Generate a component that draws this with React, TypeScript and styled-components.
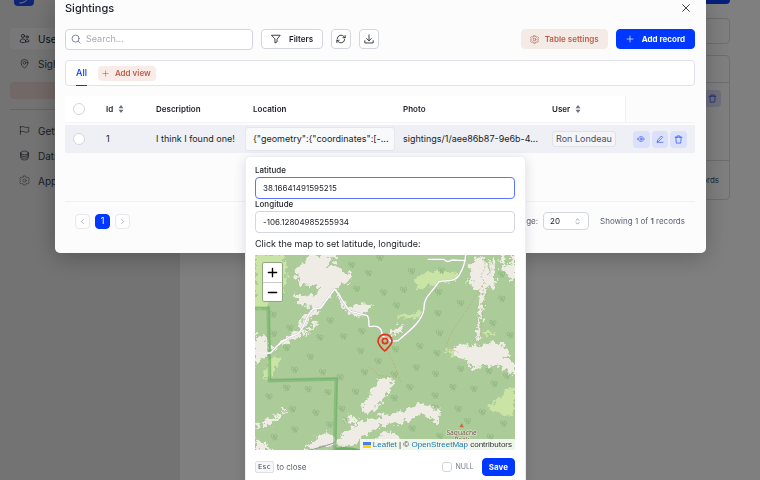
import React from "react";
import styled, { createGlobalStyle, css } from "styled-components";
import {
  HiOutlineUsers,
  HiOutlineMapPin,
  HiOutlineFlag,
  HiOutlineCircleStack,
} from "react-icons/hi2";

const GlobalStyle = createGlobalStyle`
  *, *::before, *::after { box-sizing: border-box; }
  html, body { margin: 0; padding: 0; }
  body {
    font-family: Inter, "Liberation Sans", sans-serif;
    font-size: 9px;
    line-height: 12px;
    color: #1b1e26;
    overflow: hidden;
  }
  button, input, select { font: inherit; color: inherit; margin: 0; }
  button { cursor: pointer; }
`;

/* ---------- icons ---------- */

const Icon = styled.svg<{ $size?: number; $weight?: number }>`
  width: ${(p) => p.$size ?? 10}px;
  height: ${(p) => p.$size ?? 10}px;
  flex: none;
  display: block;
  fill: none;
  stroke: currentColor;
  stroke-width: ${(p) => p.$weight ?? 2};
  stroke-linecap: round;
  stroke-linejoin: round;
`;

type IconProps = { size?: number; weight?: number };

const makeIcon = (body: React.ReactNode) =>
  function Glyph({ size, weight }: IconProps) {
    return (
      <Icon viewBox="0 0 24 24" $size={size} $weight={weight} aria-hidden="true">
        {body}
      </Icon>
    );
  };

const SearchIcon = makeIcon(<><circle cx="11" cy="11" r="8.5" /><path d="M17.5 17.5 22 22" /></>);
const FilterIcon = makeIcon(<path d="M2 3h20l-7.500 9.500V19l-5 2.500v-9z" />);
const RefreshIcon = makeIcon(
  <><path d="M3 11a9.200 9.200 0 0 1 16.500-4.500L22 9" /><path d="M22 3.500V9h-5.500" /><path d="M21 13a9.200 9.200 0 0 1-16.500 4.500L2 15" /><path d="M2 20.500V15h5.500" /></>
);
const DownloadIcon = makeIcon(<><path d="M12 2v14M6.500 11l5.500 5.500 5.500-5.500" /><path d="M2 16v5.500h20V16" /></>);
const PlusIcon = makeIcon(<path d="M12 3v18M3 12h18" />);
const CloseIcon = makeIcon(<path d="M4 4l16 16M20 4 4 20" />);
const CogIcon = makeIcon(
  <>
    <path d="M10 2h4l.7 2.700 2.400 1 2.500-1.400 2.800 2.800L21 9.600l.8 2.400-.8 2.400 1.400 2.500-2.800 2.800-2.500-1.400-2.400 1L14 22h-4l-.7-2.700-2.400-1-2.500 1.400-2.800-2.800L3 14.400 2.200 12 3 9.600 1.600 7.100l2.800-2.800 2.500 1.400 2.400-1z" />
    <circle cx="12" cy="12" r="3.500" />
  </>
);
const EyeIcon = makeIcon(<><path d="M2 12c3-5 6.500-7 10-7s7 2 10 7c-3 5-6.500 7-10 7s-7-2-10-7z" /><circle cx="12" cy="12" r="3.200" /></>);
const PenIcon = makeIcon(<><path d="M4 20l1-5L16 3l4 4L9 18z" /><path d="M3 22h18" /></>);
const TrashIcon = makeIcon(<><path d="M3 6h18M8 6V2.500h8V6" /><path d="M5 6l1 15.500h12L19 6" /></>);
const LeftIcon = makeIcon(<path d="M15 5l-7 7 7 7" />);
const RightIcon = makeIcon(<path d="M9 5l7 7-7 7" />);
const ChevronsIcon = makeIcon(<path d="M7 8l5-5 5 5M7 16l5 5 5-5" />);

const SortSvg = styled.svg`
  width: 6px;
  height: 8px;
  fill: #6a7180;
`;
const SortIcon = () => (
  <SortSvg viewBox="0 0 12 16" aria-hidden="true">
    <path d="M6 0l5 6.500H1zM6 16l5-6.500H1z" />
  </SortSvg>
);

/* ---------- page behind the dialog ---------- */

const Page = styled.div`
  display: flex;
  min-height: 100vh;
  background: #fefefe;
`;

const Sidebar = styled.nav`
  width: 180px;
  flex: none;
  padding: 0 10px;
  background: #e6e6e8;
`;

const Logo = styled.div`
  width: 20px;
  height: 6px;
  margin: 0 0 22px 4px;
  border-radius: 0 0 4px 4px;
  background: #1c49f0;
  color: #fff;
  overflow: hidden;
`;

const NavLink = styled.a<{ $active?: boolean }>`
  display: flex;
  align-items: center;
  gap: 8px;
  height: 21px;
  margin-bottom: 4px;
  padding-left: 9px;
  border-radius: 4px;
  font-size: 10px;
  color: #3c3e46;
  text-decoration: none;
  svg { width: 11px; height: 11px; }
  ${(p) => p.$active && css`background: #f0f0f3; color: #16181e;`}
`;

const NavAdd = styled.button`
  display: block;
  width: 100%;
  height: 17px;
  margin: 8px 0 10px;
  border: 0;
  border-radius: 4px;
  background: #e4d0cc;
`;

const NavRule = styled.hr`
  height: 1px;
  margin: 0 0 10px;
  border: 0;
  background: #c9cace;
`;

const Main = styled.main`
  flex: 1;
  display: flex;
  flex-direction: column;
  padding: 0 30px 0 20px;
`;

const MainAction = styled.button`
  align-self: flex-end;
  width: 70px;
  height: 4px;
  margin-bottom: 14px;
  border: 0;
  border-radius: 0 0 4px 4px;
  background: #0d3ef5;
`;

const Panel = styled.section`
  border: 1px solid #dcdde2;
  border-radius: 4px;
  margin-bottom: 11px;
  min-height: 26px;
`;

const PanelRow = styled.div<{ $height: number }>`
  display: flex;
  justify-content: flex-end;
  align-items: center;
  height: ${(p) => p.$height}px;
  padding: 0 10px;
  color: #4a4e5a;
  font-size: 8px;
  & + & { border-top: 1px solid #dcdde2; }
`;

const PanelTop = styled(PanelRow)`
  align-items: flex-start;
  padding: 7px 8px 0;
`;

/* ---------- dialog ---------- */

const Scrim = styled.div`
  position: fixed;
  inset: 0;
  padding: 0 54px 0 55px;
  background: rgba(0, 0, 0, 0.5);
  overflow: hidden;
`;

const Dialog = styled.div`
  padding: 0 11px 22px 10px;
  border-radius: 0 0 5px 5px;
  background: #fcfcfd;
  box-shadow: 0 4px 24px rgba(0, 0, 0, 0.25);
`;

const DialogHeader = styled.header`
  display: flex;
  align-items: center;
  justify-content: space-between;
  height: 16px;
  margin-bottom: 13px;
`;

const Title = styled.h2`
  margin: 0;
  font-size: 11px;
  line-height: 16px;
  font-weight: 500;
`;

const CloseButton = styled.button`
  padding: 0 4px;
  border: 0;
  background: none;
`;

const Toolbar = styled.div`
  display: flex;
  align-items: center;
  gap: 8px;
  height: 20px;
  margin-bottom: 11px;
`;

const SearchBox = styled.label`
  display: flex;
  align-items: center;
  gap: 5px;
  width: 188px;
  height: 21px;
  padding: 0 5px;
  border: 1px solid #d3d6dd;
  border-radius: 4px;
  background: #fff;
  color: #6a7180;
  input {
    flex: 1;
    min-width: 0;
    padding: 0;
    border: 0;
    outline: 0;
    background: none;
  }
  input::placeholder { color: #a4a9b5; opacity: 1; }
`;

const Button = styled.button<{ $kind?: "plain" | "soft" | "primary"; $square?: boolean }>`
  display: flex;
  align-items: center;
  justify-content: center;
  gap: 6px;
  height: 20px;
  padding: 0 ${(p) => (p.$square ? 0 : 8)}px;
  width: ${(p) => (p.$square ? "20px" : "auto")};
  border: 1px solid #d3d6dd;
  border-radius: 4px;
  background: #fff;
  font-size: 8px;
  font-weight: 600;
  white-space: nowrap;
  ${(p) => p.$kind === "soft" && css`border-color: #f4ebe7; background: #f4ebe7; color: #b9614a;`}
  ${(p) => p.$kind === "primary" && css`border-color: #0038ff; background: #0038ff; color: #fff; font-weight: 700;`}
`;

const WideButton = styled(Button)`
  gap: 8px;
  padding: 0 9px;
`;

const Spacer = styled.div`
  flex: 1;
`;

const Views = styled.div`
  display: flex;
  align-items: center;
  gap: 11px;
  height: 26px;
  margin-bottom: 10px;
  padding: 0 10px;
  border: 1px solid #e0e2e8;
  border-radius: 4px;
  background: #fff;
`;

const ViewTab = styled.button`
  align-self: stretch;
  margin-bottom: -1px;
  padding: 0;
  border: 0;
  border-bottom: 1px solid #0038ff;
  background: none;
  color: #0038ff;
  font-weight: 500;
`;

const AddView = styled.button`
  display: flex;
  align-items: center;
  gap: 6px;
  height: 15px;
  padding: 0 5px 0 4px;
  border: 0;
  border-radius: 4px;
  background: #f9ece8;
  color: #b9614a;
  font-size: 8px;
  font-weight: 600;
`;

const Records = styled.table`
  width: 100%;
  table-layout: fixed;
  border-collapse: separate;
  border-spacing: 0;
`;

const HeadCell = styled.th<{ $width?: number; $last?: boolean }>`
  width: ${(p) => (p.$width ? `${p.$width}px` : "auto")};
  height: 27px;
  padding: 0 8px;
  border-bottom: 1px solid #f3f3f6;
  background: ${(p) => (p.$last ? "#fcfcfd" : "#fff")};
  border-left: ${(p) => (p.$last ? "1px solid #f0f0f3" : "0")};
  font-size: 8px;
  font-weight: 600;
  text-align: left;
`;

const HeadLabel = styled.span`
  display: flex;
  align-items: center;
  gap: 5px;
`;

const Cell = styled.td`
  position: relative;
  height: 28px;
  padding: 0 8px;
  background: #eef0f5;
  white-space: nowrap;
`;

const GapRow = styled.tr`
  height: 2px;
`;

const LocationCell = styled(Cell)`
  padding: 2px 0;
`;

const CellEditor = styled.div`
  height: 24px;
  padding: 5px 7px;
  border: 1px solid #e4e6ec;
  border-radius: 3px;
  background: #f8f9fb;
`;

const Check = styled.input<{ $round?: boolean }>`
  appearance: none;
  display: block;
  flex: none;
  width: ${(p) => (p.$round ? 12 : 10)}px;
  height: ${(p) => (p.$round ? 12 : 10)}px;
  border: 1px solid #d3d6dd;
  border-radius: ${(p) => (p.$round ? "50%" : "3px")};
  background: #fff;
`;

const UserTag = styled.span`
  display: inline-block;
  padding: 1px 3px;
  border: 1px solid #e0e2e8;
  border-radius: 3px;
  background: #f4f5f8;
  color: #4a5060;
`;

const Actions = styled.div`
  display: flex;
  justify-content: flex-end;
  gap: 2px;
`;

const IconButton = styled.button`
  display: flex;
  align-items: center;
  justify-content: center;
  width: 17px;
  height: 17px;
  padding: 0;
  border: 0;
  border-radius: 4px;
  background: #dbe0fb;
  color: #2f55f5;
`;

const Footer = styled.footer`
  display: flex;
  align-items: center;
  gap: 5px;
  height: 30px;
  margin-top: 48px;
  padding: 9px 10px 0;
  border-top: 1px solid #f1f1f4;
  color: #5a6070;
  font-size: 8px;
  white-space: nowrap;
`;

const PageButton = styled.button<{ $current?: boolean }>`
  display: flex;
  align-items: center;
  justify-content: center;
  width: 15px;
  height: 15px;
  padding: 0;
  border: 1px solid ${(p) => (p.$current ? "#0038ff" : "#e6e8ed")};
  border-radius: 4px;
  background: ${(p) => (p.$current ? "#0038ff" : "#fff")};
  color: ${(p) => (p.$current ? "#fff" : "#7a8090")};
  font-size: 9px;
`;

const SizeLabel = styled.label`
  display: flex;
  align-items: center;
  gap: 5px;
`;

const SelectBox = styled.span`
  display: grid;
  grid-template-columns: 1fr 14px;
  align-items: center;
  width: 46px;
  height: 18px;
  border: 1px solid #d3d6dd;
  border-radius: 4px;
  background: #fff;
  select {
    grid-area: 1 / 1 / 2 / 3;
    appearance: none;
    height: 100%;
    padding: 0 6px;
    border: 0;
    background: none;
    color: #1b1e26;
  }
  svg { grid-area: 1 / 2; pointer-events: none; }
`;

const Summary = styled.span`
  margin-left: 6px;
  b { font-weight: 600; }
`;

/* ---------- location popover ---------- */

const Popover = styled.div`
  position: absolute;
  z-index: 2;
  top: calc(100% + 3px);
  left: 0;
  width: 281px;
  padding: 8px 10px 20px 9px;
  border: 1px solid #eceef2;
  border-radius: 5px;
  background: #fff;
  box-shadow: 0 3px 12px rgba(20, 24, 40, 0.14);
`;

const Field = styled.label`
  display: block;
  margin-bottom: 1px;
  font-size: 8px;
  font-weight: 500;
  line-height: 11px;
`;

const FieldInput = styled.input`
  display: block;
  width: 100%;
  height: 22px;
  padding: 0 7px;
  border: 1px solid #d3d6dd;
  border-radius: 4px;
  outline: 0;
  background: #fff;
  font-size: 8px;
  &:focus { border-color: #5b74ff; }
`;

const Hint = styled.p`
  margin: 5px 0;
  line-height: 12px;
`;

const MapFrame = styled.div`
  position: relative;
  font-family: "Liberation Sans", Arial, sans-serif;
`;

const MapSvg = styled.svg`
  display: block;
  width: 100%;
`;

const ZoomBar = styled.div`
  position: absolute;
  top: 7px;
  left: 7px;
  width: 21px;
  border: 1px solid #8fa884;
  border-radius: 2px;
  background: #fff;
`;

const ZoomButton = styled.button`
  display: flex;
  align-items: center;
  justify-content: center;
  width: 100%;
  height: 19px;
  padding: 0;
  border: 0;
  background: none;
  color: #000;
  & + & { border-top: 1px solid #ccc; }
`;

const Attribution = styled.div`
  position: absolute;
  right: 0;
  bottom: 0;
  display: flex;
  align-items: center;
  gap: 2px;
  padding: 0 3px;
  background: rgba(255, 255, 255, 0.8);
  color: #333;
  font-size: 8px;
  line-height: 11px;
  a { color: #1f78b0; text-decoration: none; }
`;

const Flag = styled.svg`
  width: 8px;
  height: 6px;
`;

const PopoverFooter = styled.div`
  display: flex;
  align-items: center;
  gap: 3px;
  margin-top: 8px;
  color: #5a6070;
  font-size: 8px;
`;

const Key = styled.kbd`
  padding: 0 2px;
  border: 1px solid #dde0e7;
  border-radius: 2px;
  background: #f7f8fa;
  color: #3c414d;
  font-family: "DejaVu Sans Mono", monospace;
  font-size: 7px;
  line-height: 10px;
`;

const NullLabel = styled.label`
  display: flex;
  align-items: center;
  gap: 3px;
  margin: 0 5px 0 auto;
  color: #7a8090;
  font-size: 7px;
`;

const SaveButton = styled(Button)`
  height: 18px;
  padding: 0 6px;
`;

const trees: [number, number][] = [
  [377, 12], [292, 33], [343, 58], [472, 52], [562, 50], [742, 62], [448, 108], [307, 105], [388, 116],
  [743, 135], [553, 115], [619, 148], [427, 155], [551, 178], [228, 200], [57, 182], [107, 222], [323, 232],
  [197, 251], [268, 248], [58, 240], [556, 238], [768, 244], [716, 208], [497, 277], [97, 282], [168, 309], [319, 291],
  [372, 322], [424, 286], [548, 298], [121, 348], [205, 355], [331, 355], [258, 370], [421, 362], [486, 341],
  [544, 360], [619, 345], [704, 352], [757, 366], [97, 402], [162, 406], [221, 415], [44, 428], [304, 414],
  [420, 433], [467, 400], [543, 425], [596, 400], [659, 405], [720, 390], [115, 466], [185, 477], [263, 465],
  [542, 462], [612, 465], [684, 475], [748, 509], [474, 524], [226, 512], [122, 527], [60, 550], [708, 550],
  [275, 500], [557, 547], [640, 502],
];

const land = [
  "M165 3H250L225 25 220 38 245 25 262 50 290 60 292 75 265 92 240 108 232 128 215 142 205 165 180 178 160 208 150 238 110 258 60 288 48 292 95 252 135 228 145 190 172 165 180 150 155 158 118 132 130 122 180 125 200 98 165 95 140 92 125 70 122 42 150 28z",
  "M245 112 268 140 282 165 310 146 345 150 356 160 335 172 315 192 288 182 266 160z",
  "M190 198 160 225 165 232 188 215zM175 230 150 245 155 250z",
  "M408 232 432 216 452 212 440 232 415 245z",
  "M640 32 660 25 675 5 700 22 705 50 730 85 715 105 695 95 692 130 684 180 674 265 666 265 678 150 680 115 655 98 648 75 625 95 655 62z",
  "M740 3H752L750 30 772 35 770 3H783V90L768 70 745 40z",
  "M712 15 724 20 720 75 712 60z",
  "M595 285 632 268 680 278 715 265 750 270 765 300 752 310 783 332V365L740 335 690 332 660 348 635 320 605 304z",
  "M375 378 412 370 415 390 395 430 370 458 340 484 325 475 322 460 345 428 355 400z",
  "M230 575 262 545 300 518 340 495 400 480 440 475 470 463 490 450 530 452 562 470 550 508 525 488 500 480 470 496 440 512 390 512 345 535 300 575z",
  "M3 250 30 243 45 270 42 302 20 320 3 335z",
  "M22 512 45 492 85 480 75 498 40 514zM3 505 22 512 10 520zM72 470 105 464 100 472z",
  "M3 555 30 568 60 588H3z",
  "M150 585 170 568 200 560 190 545 215 533 242 548 236 578z",
  "M370 545 405 530 430 545 440 560H365z",
  "M265 500 285 480 290 490 310 488 300 500 325 502 300 512z",
];

const meadow = [
  "M3 3H88L100 55 92 105 70 130 40 150 28 162H3z",
  "M480 88 500 60 540 50 600 55 628 62 590 82 550 90 500 106z",
  "M428 182 470 180 506 168 495 195 440 190z",
  "M700 455 740 432 755 405 783 400V490L750 482 705 467z",
  "M685 232 725 235 722 244 690 242z",
  "M40 315 80 303 76 332 50 368 25 376z",
  "M572 288 610 285 620 302 600 308z",
];

function TerrainMap() {
  return (
    <MapSvg viewBox="3 3 780 585" role="img" aria-label="Map">
      <defs>
        <filter id="rough" x="-5%" y="-5%" width="110%" height="110%" colorInterpolationFilters="sRGB">
          <feTurbulence type="fractalNoise" baseFrequency="0.07" numOctaves="3" seed="4" />
          <feDisplacementMap in="SourceGraphic" scale="34" xChannelSelector="R" yChannelSelector="G" />
        </filter>
        <g id="tree" fill="none" stroke="#8ab27b" strokeWidth="2">
          <ellipse cx="-5" cy="-4" rx="4" ry="5" />
          <path d="M-1-4v7l-3 6" />
          <ellipse cx="6" cy="-3" rx="4" ry="5" />
          <path d="M3 1v8M6 3v5" />
        </g>
      </defs>
      <rect x="3" y="3" width="780" height="585" fill="#abcb98" />
      <g filter="url(#rough)">
        {meadow.map((d) => <path key={d} d={d} fill="#c9e4a4" />)}
        {land.map((d) => <path key={d} d={d} fill="#efece6" />)}
      </g>
      <g fill="none" stroke="#69ad62">
        <path d="M3 163H43L47 380 247 375 242 588" strokeWidth="11" strokeOpacity=".5" />
        <path d="M3 161H45L49 378 249 373 245 588" strokeWidth="3" strokeOpacity=".5" />
      </g>
      <path d="M245 588v-7q40-7 80 7z" fill="#6faf65" />
      {trees.map(([x, y]) => <use key={`${x}-${y}`} href="#tree" x={x} y={y} />)}
      <g fill="none" stroke="#c2a76d" strokeWidth="2" strokeDasharray="6 5">
        <path d="M690 85 660 135 620 195 590 240 570 290M695 90l-15-25 12-20 2-38M685 95 690 120" />
        <path d="M398 288 420 330 440 385M340 338l20 8 10 18 40 4" />
        <path d="M588 290h20l8 12" />
      </g>
      <path d="M700 108 688 160 676 262" fill="none" stroke="#d0a291" strokeWidth="2" strokeDasharray="5 5" />
      {[
        { color: "#bdbac0", width: 6 },
        { color: "#ffffff", width: 4 },
      ].map(({ color, width }) => (
        <g key={color} fill="none" stroke={color} strokeWidth={width} strokeLinejoin="round">
          <path d="M3 297H50C75 265 105 248 130 240 155 222 150 190 178 165L200 162 242 105C262 130 275 160 290 172L340 185C350 200 340 218 348 218 375 212 385 225 384 245L412 262 432 260C470 228 505 200 510 165 508 130 530 120 555 83 585 78 608 85 620 55 632 35 634 15 635 3" />
          <path d="M521 16H570Q580 28 593 18L635 20" />
        </g>
      ))}
      <path d="M170 588 215 575 245 565" fill="none" stroke="#9a9a9a" strokeWidth="3" />
      <path d="M623 508l7 12h-14z" fill="#d4683c" />
      <g
        fill="#67543f"
        stroke="#e6ecd9"
        strokeWidth="3"
        paintOrder="stroke"
        fontFamily="Noto Sans, sans-serif"
        fontSize="20"
        textAnchor="middle"
      >
        <text x="623" y="542">Saguache</text>
        <text x="623" y="563">Peak</text>
      </g>
      <g fill="none" stroke="#e5311d" strokeWidth="5" strokeLinejoin="round">
        <path d="M392 291C380 280 372 272 372 261a21 20 0 0 1 42 0c0 11-10 19-22 30z" />
        <circle cx="393" cy="261" r="8" />
      </g>
    </MapSvg>
  );
}

function LocationPopover() {
  return (
    <Popover role="dialog" aria-label="Edit location">
      <Field htmlFor="lat">Latitude</Field>
      <FieldInput id="lat" defaultValue="38.16641491595215" autoFocus />
      <Field htmlFor="lng">Longitude</Field>
      <FieldInput id="lng" defaultValue="-106.12804985255934" />
      <Hint>Click the map to set latitude, longitude:</Hint>
      <MapFrame>
        <TerrainMap />
        <ZoomBar>
          <ZoomButton aria-label="Zoom in"><PlusIcon size={11} weight={3} /></ZoomButton>
          <ZoomButton aria-label="Zoom out">
            <Icon viewBox="0 0 24 24" $size={11} $weight={3}><path d="M3 12h18" /></Icon>
          </ZoomButton>
        </ZoomBar>
        <Attribution>
          <Flag viewBox="0 0 12 8" preserveAspectRatio="none" aria-hidden="true">
            <path fill="#4c7be1" d="M0 0h12v4H0z" />
            <path fill="#ffd500" d="M0 4h12v4H0z" />
          </Flag>
          <span>
            <a href="#leaflet">Leaflet</a> | © <a href="#osm">OpenStreetMap</a> contributors
          </span>
        </Attribution>
      </MapFrame>
      <PopoverFooter>
        <Key>Esc</Key>
        <span>to close</span>
        <NullLabel><Check type="checkbox" />NULL</NullLabel>
        <SaveButton $kind="primary">Save</SaveButton>
      </PopoverFooter>
    </Popover>
  );
}

export default function App() {
  return (
    <>
      <GlobalStyle />
      <Page>
        <Sidebar>
          <Logo>
            <Icon viewBox="0 0 20 20" $size={20} $weight={1}><path d="M6 3q6 0 8-5" /></Icon>
          </Logo>
          <NavLink href="#users" $active><HiOutlineUsers />Users</NavLink>
          <NavLink href="#sightings"><HiOutlineMapPin />Sightings</NavLink>
          <NavAdd aria-label="Add table" />
          <NavRule />
          <NavLink href="#start"><HiOutlineFlag />Getting started</NavLink>
          <NavLink href="#data"><HiOutlineCircleStack />Data sources</NavLink>
          <NavLink href="#app"><CogIcon weight={1} />App settings</NavLink>
        </Sidebar>
        <Main>
          <MainAction aria-label="Add" />
          <Panel />
          <Panel>
            <PanelRow $height={26} />
            <PanelTop $height={78}>
              <IconButton aria-label="Delete user"><TrashIcon size={9} /></IconButton>
            </PanelTop>
            <PanelRow $height={39}>Showing 1 of 1 records</PanelRow>
          </Panel>
        </Main>
      </Page>
      <Scrim>
        <Dialog role="dialog" aria-labelledby="dialog-title">
          <DialogHeader>
            <Title id="dialog-title">Sightings</Title>
            <CloseButton aria-label="Close"><CloseIcon size={10} /></CloseButton>
          </DialogHeader>
          <Toolbar>
            <SearchBox>
              <SearchIcon />
              <input type="search" placeholder="Search..." aria-label="Search" />
            </SearchBox>
            <WideButton><FilterIcon />Filters</WideButton>
            <Button $square aria-label="Refresh"><RefreshIcon /></Button>
            <Button $square aria-label="Download"><DownloadIcon /></Button>
            <Spacer />
            <Button $kind="soft"><CogIcon size={9} />Table settings</Button>
            <WideButton $kind="primary"><PlusIcon size={8} />Add record</WideButton>
          </Toolbar>
          <Views>
            <ViewTab>All</ViewTab>
            <AddView><PlusIcon size={7} />Add view</AddView>
          </Views>
          <Records>
            <thead>
              <tr>
                <HeadCell $width={33}><Check type="checkbox" $round aria-label="Select all" /></HeadCell>
                <HeadCell $width={50}><HeadLabel>Id<SortIcon /></HeadLabel></HeadCell>
                <HeadCell $width={97}>Description</HeadCell>
                <HeadCell $width={150}>Location</HeadCell>
                <HeadCell>Photo</HeadCell>
                <HeadCell $width={81}><HeadLabel>User<SortIcon /></HeadLabel></HeadCell>
                <HeadCell $width={70} $last aria-label="Actions" />
              </tr>
            </thead>
            <tbody>
              <GapRow />
              <tr>
                <Cell><Check type="checkbox" $round aria-label="Select record 1" /></Cell>
                <Cell>1</Cell>
                <Cell>I think I found one!</Cell>
                <LocationCell>
                  <CellEditor>{'{"geometry":{"coordinates":[-...'}</CellEditor>
                  <LocationPopover />
                </LocationCell>
                <Cell>sightings/1/aee86b87-9e6b-4...</Cell>
                <Cell><UserTag>Ron Londeau</UserTag></Cell>
                <Cell>
                  <Actions>
                    <IconButton aria-label="View"><EyeIcon size={8} /></IconButton>
                    <IconButton aria-label="Edit"><PenIcon size={8} /></IconButton>
                    <IconButton aria-label="Delete"><TrashIcon size={9} /></IconButton>
                  </Actions>
                </Cell>
              </tr>
            </tbody>
          </Records>
          <Footer>
            <PageButton aria-label="Previous page"><LeftIcon size={7} /></PageButton>
            <PageButton $current>1</PageButton>
            <PageButton aria-label="Next page"><RightIcon size={7} /></PageButton>
            <Spacer />
            <SizeLabel>
              Records per page:
              <SelectBox>
                <select defaultValue="20"><option>20</option><option>50</option></select>
                <ChevronsIcon size={7} />
              </SelectBox>
            </SizeLabel>
            <Summary>Showing 1 of <b>1</b> records</Summary>
          </Footer>
        </Dialog>
      </Scrim>
    </>
  );
}
